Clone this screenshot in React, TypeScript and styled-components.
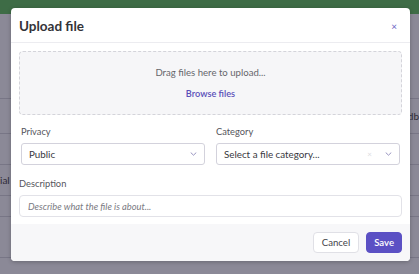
import React from 'react';
import styled, { createGlobalStyle } from 'styled-components';

const GlobalStyle = createGlobalStyle`
  html, body {
    margin: 0;
    padding: 0;
    width: 419px;
    height: 274px;
    overflow: hidden;
    font-family: Lato, "Open Sans", sans-serif;
  }
`;

// page behind the dialog
const Page = styled.div`
  position: relative;
  width: 419px;
  height: 274px;
  background: #eeeef2;
  overflow: hidden;
`;

const TopBar = styled.div`
  height: 14px;
  background: #3e6c46;
`;

const PageBody = styled.div`
  display: flex;
  flex-direction: column;
`;

const PageRow = styled.div<{ $h: number }>`
  height: ${(p) => p.$h}px;
  border-bottom: 1px solid #c9c8d0;
  font-size: 10px;
  color: #333;
  display: flex;
  align-items: center;
  justify-content: space-between;
`;

const Overlay = styled.div`
  position: absolute;
  inset: 14px 0 0 0;
  background: rgba(40, 36, 60, 0.5);
`;

const Modal = styled.div`
  position: absolute;
  left: 11px;
  top: 8px;
  width: 399px;
  height: 253px;
  background: #fff;
  border-radius: 4px;
  box-shadow: 0 1px 4px rgba(0, 0, 0, 0.25);
  display: flex;
  flex-direction: column;
  overflow: hidden;
`;

const Header = styled.div`
  height: 35px;
  border-bottom: 1px solid #ececf0;
  display: flex;
  align-items: center;
  justify-content: space-between;
  padding: 0 13px 0 8px;
  box-sizing: border-box;
`;

const Title = styled.h2`
  margin: 0;
  font-size: 13.5px;
  font-weight: 700;
  color: #333338;
  padding-top: 1px;
`;

const Close = styled.button`
  border: 0;
  background: none;
  padding: 2px 0 0;
  color: #6b63c4;
  font-size: 10px;
  line-height: 1;
  cursor: pointer;
  font-family: inherit;
`;

const Body = styled.div`
  padding: 8px 8px 0;
  display: flex;
  flex-direction: column;
  flex: 1;
`;

const Dropzone = styled.div`
  height: 64px;
  box-sizing: border-box;
  border: 1px dashed #d4d4da;
  border-radius: 4px;
  background: #f6f6f8;
  display: flex;
  flex-direction: column;
  align-items: center;
  justify-content: center;
  gap: 10px;
`;

const DropText = styled.div`
  font-size: 9.6px;
  color: #66666c;
`;

const BrowseLink = styled.a`
  font-size: 9.2px;
  font-weight: 600;
  color: #5a4fb8;
  text-decoration: none;
`;

const FieldRow = styled.div`
  display: grid;
  grid-template-columns: 1fr 1fr;
  gap: 11px;
  padding: 0 2px;
  margin-top: 9px;
`;

const Field = styled.div`
  display: flex;
  flex-direction: column;
`;

const Label = styled.label`
  font-size: 9.3px;
  color: #55555c;
  height: 15px;
  line-height: 15px;
  margin-bottom: 4px;
`;

const Select = styled.div`
  height: 22px;
  box-sizing: border-box;
  border: 1px solid #d3d2dc;
  border-radius: 3px;
  display: flex;
  align-items: center;
  padding: 0 7px 0 7px;
  font-size: 9.8px;
  color: #38383e;
  gap: 6px;
`;

const SelectValue = styled.span`
  flex: 1;
`;

const ClearX = styled.span`
  color: #dcdce2;
  font-size: 8px;
  margin-right: 7px;
`;

const DescField = styled(Field)`
  margin-top: 11px;
`;

const TextInput = styled.input`
  height: 22px;
  box-sizing: border-box;
  border: 1px solid #e2e2e8;
  border-radius: 4px;
  padding: 0 8px;
  font-family: inherit;
  font-size: 9.3px;
  color: #333;
  outline: none;

  &::placeholder {
    font-style: italic;
    color: #7a7a82;
  }
`;

const Footer = styled.div`
  height: 37px;
  background: #f7f7f9;
  display: flex;
  align-items: center;
  justify-content: flex-end;
  gap: 7px;
  padding: 0 8px;
`;

const Button = styled.button<{ $primary?: boolean }>`
  height: 21px;
  box-sizing: border-box;
  border-radius: 4px;
  padding: 0 ${(p) => (p.$primary ? '7px' : '8px')};
  font-family: inherit;
  font-size: 9.6px;
  font-weight: ${(p) => (p.$primary ? 600 : 400)};
  border: 1px solid ${(p) => (p.$primary ? '#5b50c4' : '#e0e0e6')};
  background: ${(p) => (p.$primary ? '#5b50c4' : '#fff')};
  color: ${(p) => (p.$primary ? '#fff' : '#44444a')};
  cursor: pointer;
`;

const Chevron = () => (
  <svg width="7" height="4" viewBox="0 0 7 4" fill="none">
    <path d="M1 0.8l2.5 2.4 2.5-2.4" stroke="#8b87b8" strokeWidth="0.9" strokeLinecap="round" strokeLinejoin="round" />
  </svg>
);

const App: React.FC = () => {
  return (
    <>
      <GlobalStyle />
      <Page>
        <TopBar />
        <PageBody>
          <PageRow $h={84} />
          <PageRow $h={34}>
            <span />
            <span>db</span>
          </PageRow>
          <PageRow $h={30} />
          <PageRow $h={30}>
            <span>ial</span>
          </PageRow>
          <PageRow $h={20} />
          <PageRow $h={40} />
        </PageBody>
        <Overlay />
        <Modal>
          <Header>
            <Title>Upload file</Title>
            <Close aria-label="Close">×</Close>
          </Header>
          <Body>
            <Dropzone>
              <DropText>Drag files here to upload...</DropText>
              <BrowseLink href="#">Browse files</BrowseLink>
            </Dropzone>
            <FieldRow>
              <Field>
                <Label>Privacy</Label>
                <Select>
                  <SelectValue>Public</SelectValue>
                  <Chevron />
                </Select>
              </Field>
              <Field>
                <Label>Category</Label>
                <Select>
                  <SelectValue>Select a file category...</SelectValue>
                  <ClearX>×</ClearX>
                  <Chevron />
                </Select>
              </Field>
            </FieldRow>
            <DescField>
              <Label>Description</Label>
              <TextInput placeholder="Describe what the file is about..." />
            </DescField>
          </Body>
          <Footer>
            <Button>Cancel</Button>
            <Button $primary>Save</Button>
          </Footer>
        </Modal>
      </Page>
    </>
  );
};

export default App;
